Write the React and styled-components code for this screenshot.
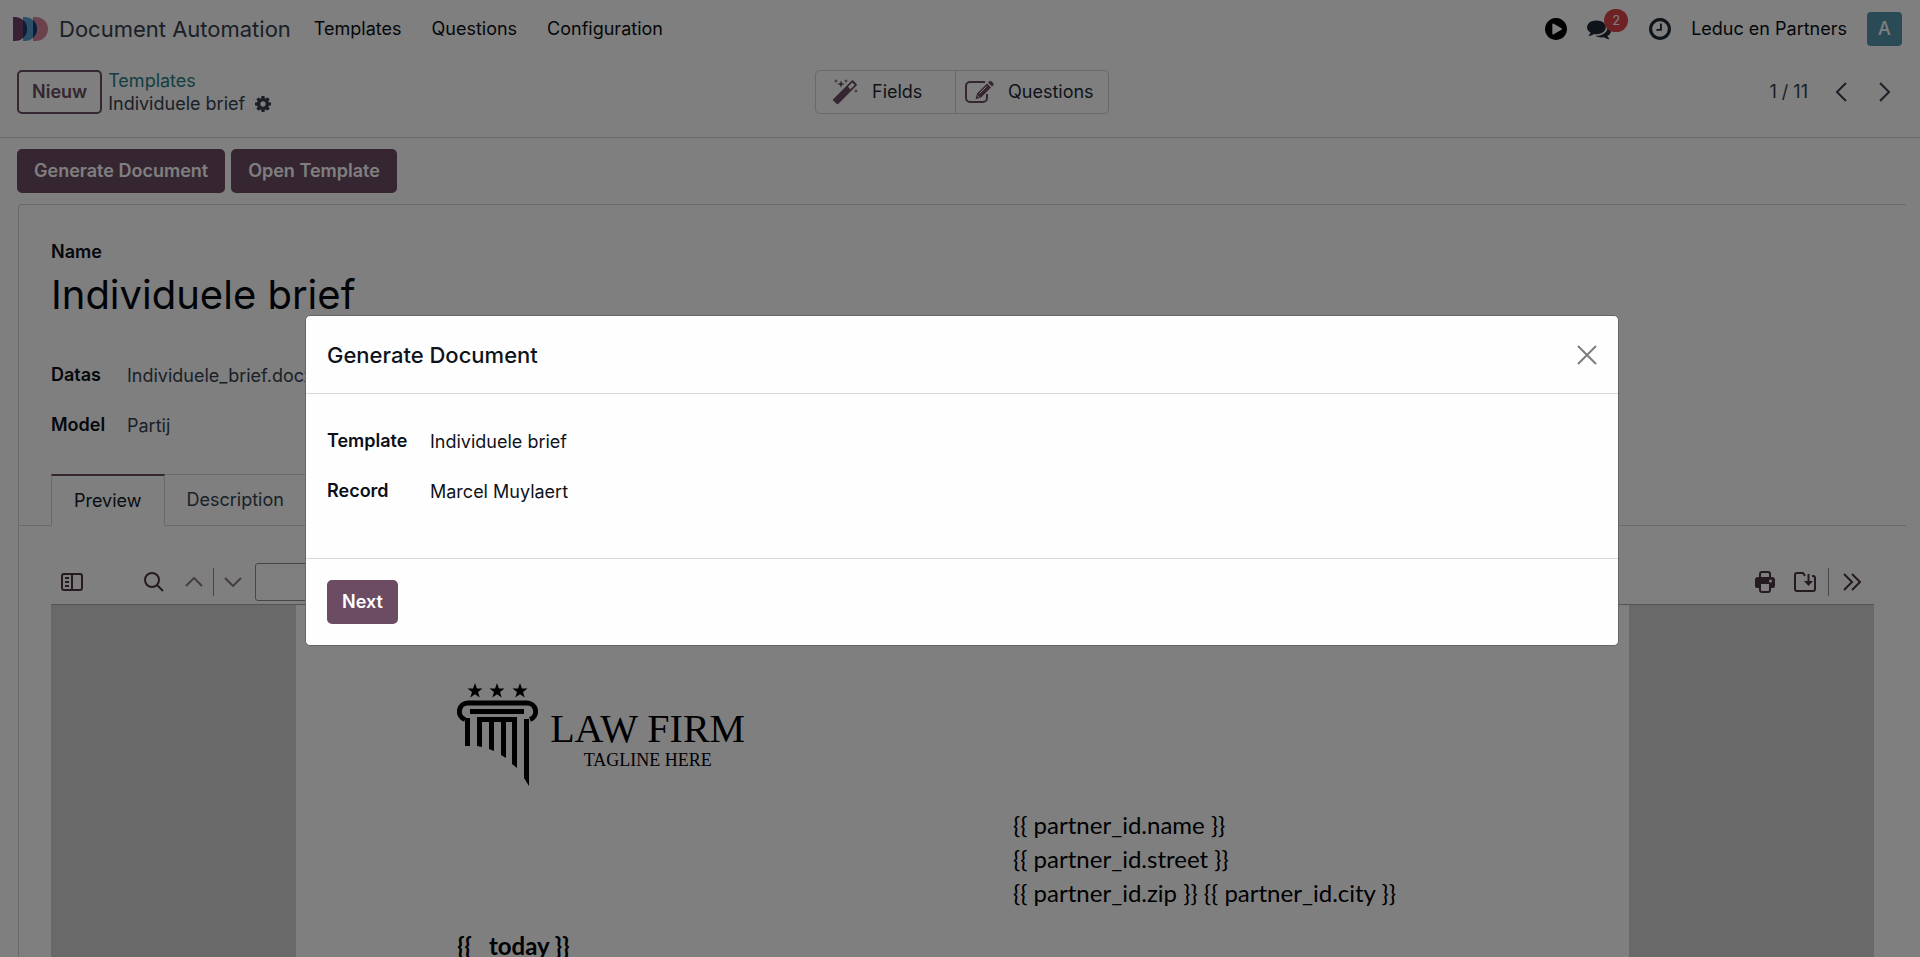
import React from 'react';
import styled, { createGlobalStyle } from 'styled-components';

const GlobalStyle = createGlobalStyle`
* {
box-sizing: border-box;
}
body {
margin: 0;
background-color: #fcfffc;
color: #374151;
font-family: Inter, "Liberation Sans", sans-serif;
font-size: 18px;
line-height: 24px;
}
button, input {
font: inherit;
color: inherit;
}
a {
color: inherit;
text-decoration: none;
}
h1, h2, p, dl, dd {
margin: 0;
}
`
const Shell = styled.div`
display: flex;
flex-direction: column;
height: 100vh;
overflow: hidden;
`
const Navbar = styled.header`
display: flex;
align-items: center;
justify-content: space-between;
flex: none;
height: 56px;
padding: 1px 18px 0 13px;
color: #0b0d14;
`
const NavGroup = styled.div`
display: flex;
align-items: center;
gap: ${({ gap }) => gap}px;
`
const Brand = styled.a`
display: flex;
align-items: center;
gap: 11px;
color: #374151;
font-size: 22px;
`
const NavMenu = styled.nav`
display: flex;
gap: 30px;
`
const IconButton = styled.button`
display: flex;
align-items: center;
justify-content: ${({ align }) => align || 'center'};
position: relative;
width: ${({ width }) => width || 22}px;
padding: 0;
border: 0;
background: none;
color: ${({ color }) => color || '#374151'};
`
const Badge = styled.span`
position: absolute;
top: -8px;
left: 17px;
width: 24px;
border-radius: 12px;
background-color: #dc444a;
color: #fcfffc;
font-size: 13px;
line-height: 23px;
text-align: center;
`
const Avatar = styled.span`
width: 35px;
border-radius: 4px;
background-color: #5494ac;
color: #fcfffc;
font-weight: 500;
line-height: 34px;
text-align: center;
`
const ControlPanel = styled.div`
display: grid;
grid-template-columns: 1fr auto 1fr;
align-items: center;
flex: none;
height: 82px;
padding: 0 13px 9px 17px;
border-bottom: 1px solid #d2d5d4;
`
const Button = styled.button`
height: 44px;
padding: 0 13px;
border: 2px solid #6b4c63;
border-radius: 5px;
background-color: ${({ outline }) => outline ? 'transparent' : '#6b4c63'};
color: ${({ outline }) => outline ? '#6b4c63' : '#ffffff'};
font-weight: 600;
white-space: nowrap;
`
const Crumbs = styled.div`
line-height: 23px;
`
const CrumbLink = styled.a`
color: #2a7f88;
`
const CrumbCurrent = styled.div`
display: flex;
align-items: center;
gap: 10px;
`
const StatButtons = styled.div`
display: flex;
border: 1px solid #d2d5d4;
border-radius: 5px;
`
const StatButton = styled.button`
display: flex;
align-items: center;
gap: 14px;
width: ${({ width }) => width}px;
height: 42px;
padding: 0 0 0 ${({ inset }) => inset}px;
border: 0;
background: none;
color: #1f2937;

& + & {
border-left: 1px solid #d2d5d4;
}
`
const Pager = styled.div`
display: flex;
align-items: center;
justify-content: flex-end;
gap: 22px;
padding-right: 11px;
`
const StatusBar = styled.div`
display: flex;
flex: none;
gap: 6px;
padding: 11px 17px;
`
const StatusButton = styled(Button)`
padding: 0 15px;
`
const Sheet = styled.main`
flex: 1;
margin: 0 13px 0 18px;
border: 1px solid #d2d5d4;
border-right-color: #f6f9f7;
border-radius: 4px 4px 0 0;
`
const SheetFields = styled.section`
padding: 35px 32px 0;
color: #05070f;
`
const FieldLabel = styled.dt`
color: #0b0f18;
font-weight: 600;
`
const Title = styled.h1`
margin: 6px 0 43px;
font-size: 40px;
font-weight: 400;
line-height: 50px;
`
const FieldList = styled.dl`
display: grid;
grid-template-columns: ${({ labels }) => labels}px 1fr;
row-gap: 26px;
`
const FieldValue = styled.dd`
padding-top: 1px;
line-height: 23px;
color: ${({ color }) => color};
`
const Tabs = styled.div`
display: flex;
margin-top: 37px;
padding-left: 32px;
border-bottom: 1px solid #d2d5d4;
`
const Tab = styled.button`
height: 52px;
margin-bottom: -1px;
padding: 0 22px;
border: 1px solid #d2d5d4;
border-left-width: ${({ active }) => active ? 1 : 0}px;
border-top: ${({ active }) => active ? '2px solid #6b4c63' : '1px solid #d2d5d4'};
border-bottom-color: ${({ active }) => active ? '#fcfffc' : '#d2d5d4'};
background: none;
color: ${({ active }) => active ? '#111827' : '#374151'};
`
const Viewer = styled.section`
padding: 34px 32px 0;
`
const Toolbar = styled.div`
display: flex;
align-items: center;
justify-content: space-between;
height: 45px;
padding: 0 11px 0 10px;
border-bottom: 1px solid #a8a8a8;
`
const ToolGroup = styled.div`
display: flex;
align-items: center;
`
const Gap = styled.span`
width: ${({ width }) => width}px;
`
const Divider = styled.span`
width: 1px;
height: 28px;
margin: 0 ${({ right }) => right}px 0 ${({ left }) => left}px;
background-color: #8c8c8c;
`
const PageInput = styled.input`
width: 86px;
height: 38px;
margin-left: 11px;
border: 1px solid #8c8c8c;
border-radius: 3px;
background: transparent;
text-align: right;
`
const Canvas = styled.div`
display: flex;
justify-content: center;
background-color: #d2d2d2;
`
const Paper = styled.article`
width: 73.1%;
height: 1400px;
padding: 78px 161px;
background-color: #fcfffc;
color: #000005;
font-family: Lato, "Open Sans", sans-serif;
font-size: 24px;
line-height: 34px;
`
const Letterhead = styled.div`
display: flex;
gap: 12px;
`
const FirmName = styled.div`
display: flex;
flex-direction: column;
align-items: center;
padding-top: 23px;
font-family: "Liberation Serif", serif;
font-size: 40px;
line-height: 45px;
`
const Tagline = styled.span`
font-size: 18px;
line-height: 18px;
`
const Address = styled.address`
margin: 20px 0 19px 55%;
font-style: normal;
white-space: nowrap;
`
const Today = styled.p`
font-weight: 700;
`
const Backdrop = styled.div`
position: fixed;
inset: 0;
padding: 315px 301px 0 305px;
background-color: rgba(0, 0, 0, 0.5);
`
const Dialog = styled.div`
border: 1px solid #646665;
border-radius: 5px;
background-color: #fefefe;
color: #0f131c;
`
const DialogHeader = styled.div`
display: flex;
align-items: center;
justify-content: space-between;
height: 78px;
padding: 0 20px 0 21px;
border-bottom: 1px solid #d8dadd;
`
const DialogTitle = styled.h2`
font-size: 22px;
font-weight: 500;
`
const DialogBody = styled.div`
height: 165px;
padding: 35px 21px;
border-bottom: 1px solid #d8dadd;
`
const DialogFooter = styled.div`
padding: 21px;
`

const CLOCK = 'M896 544v448q0 14-9 23t-23 9h-320q-14 0-23-9t-9-23v-64q0-14 9-23t23-9h224v-352q0-14 9-23t23-9h64q14 0 23 9t9 23zm416 352q0-148-73-273t-198-198-273-73-273 73-198 198-73 273 73 273 198 198 273 73 273-73 198-198 73-273zm224 0q0 209-103 385.5t-279.5 279.5-385.5 103-385.5-103-279.5-279.5-103-385.5 103-385.5 279.5-279.5 385.5-103 385.5 103 279.5 279.5 103 385.5z'
const PLAY = 'M768 128q209 0 385.5 103t279.5 279.5 103 385.5-103 385.5-279.5 279.5-385.5 103-385.5-103-279.5-279.5-103-385.5 103-385.5 279.5-279.5 385.5-103zm384 823q32-18 32-55t-32-55l-544-320q-31-19-64-1-32 19-32 56v640q0 37 32 56 16 8 32 8 17 0 32-9z'
const COMMENTS = 'M1408 768q0 139-94 257t-256.5 186.5-353.5 68.5q-86 0-176-16-124 88-278 128-36 9-86 16h-3q-11 0-20.5-8t-11.5-21q-1-3-1-6.5t.5-6.5 2-6l2.5-5 3.5-5.5 4-5 4.5-5 4-4.5q5-6 23-25t26-29.5 22.5-29 25-38.5 20.5-44q-124-72-195-177t-71-224q0-139 94-257t256.5-186.5 353.5-68.5 353.5 68.5 256.5 186.5 94 257zm384 256q0 120-71 224.5t-195 176.5q10 24 20.5 44t25 38.5 22.5 29 26 29.5 23 25q1 1 4 4.5t4.5 5 4 5 3.5 5.5l2.5 5 2 6 .5 6.5-1 6.5q-3 14-13 22t-22 7q-50-7-86-16-154-40-278-128-90 16-176 16-271 0-472-132 58 4 88 4 161 0 309-45t264-129q125-92 192-212t67-254q0-77-23-152 129 71 204 178t75 230z'
const COG = 'M1024 896q0-106-75-181t-181-75-181 75-75 181 75 181 181 75 181-75 75-181zm512-109v222q0 12-8 23t-20 13l-185 28q-19 54-39 91 35 50 107 138 10 12 10 25t-9 23q-27 37-99 108t-94 71q-12 0-26-9l-138-108q-44 23-91 38-16 136-29 186-7 28-36 28h-222q-14 0-24.5-8.5t-11.5-21.5l-28-184q-49-16-90-37l-141 107q-10 9-25 9-14 0-25-11-126-114-165-168-7-10-7-23 0-12 8-23 15-21 51-66.5t54-70.5q-27-50-41-99l-183-27q-13-2-21-12.5t-8-23.5v-222q0-12 8-23t19-13l186-28q14-46 39-92-40-57-107-138-10-12-10-24 0-10 9-23 26-36 98.5-107.5t94.5-71.5q13 0 26 10l138 107q44-23 91-38 16-136 29-186 7-28 36-28h222q14 0 24.5 8.5t11.5 21.5l28 184q49 16 90 37l142-107q9-9 24-9 13 0 25 10 129 119 165 170 7 8 7 22 0 12-8 23-15 21-51 66.5t-54 70.5q26 50 41 98l183 28q13 2 21 12.5t8 23.5z'

const Glyph = ({ d, size, box = '0 128 1536 1536' }) => (
    <svg width={size} height={size} viewBox={box} fill="currentColor" aria-hidden="true"><path d={d} /></svg>
)

const Line = ({ width, height, stroke = 2, children }) => (
    <svg width={width} height={height} viewBox={`0 0 ${width} ${height}`} fill="none" stroke="currentColor" strokeWidth={stroke} aria-hidden="true">{children}</svg>
)

const BrandMark = () => (
    <svg width="35" height="24" viewBox="0 0 35 24" aria-hidden="true">
        <path d="M20 0h3a12 12 0 0 1 0 24h-3z" fill="#d98598" />
        <path d="M10 0h2a12 12 0 0 1 0 24h-2z" fill="#52a0d0" />
        <path d="M0 0h2a12 12 0 0 1 0 24H0z" fill="#74406a" />
        <path d="M10 3a12 12 0 0 1 0 18z" fill="#1a3a6e" />
        <path d="M20 3a12 12 0 0 1 0 18z" fill="#1a3a6e" />
    </svg>
)

const Wand = () => (
    <svg width="26" height="26" viewBox="0 0 26 26" fill="#6b4c63" aria-hidden="true">
        <path fillRule="evenodd" d="M21.2 1.6 24.6 5a1 1 0 0 1 0 1.4L6.2 25a1 1 0 0 1-1.4 0L1.2 21.6a1 1 0 0 1 0-1.4L19.8 1.6a1 1 0 0 1 1.4 0zM20.3 3.5 16 7.8l2.4 2.4 4.3-4.3z" />
        <path d="m9 1.5 1 2.6 2.7 1-2.7 1-1 2.7-1-2.7-2.7-1 2.7-1zM4 0l.6 1.4L6 2l-1.4.6L4 4l-.6-1.4L2 2l1.4-.6zM14 0l.6 1.4L16 2l-1.4.6L14 4l-.6-1.4L12 2l1.4-.6zM24 10l.6 1.4 1.4.6-1.4.6-.6 1.4-.6-1.4L22 12l1.4-.6z" />
    </svg>
)

const Edit = () => (
    <svg width="29" height="24" viewBox="0 0 29 24" fill="none" aria-hidden="true">
        <path d="M20 2H5a4 4 0 0 0-4 4v12a4 4 0 0 0 4 4h13a4 4 0 0 0 4-4v-4" stroke="#6b4c63" strokeWidth="2" />
        <path d="m22 3.5 4 4L16 17.6l-5.5 1.6 1.5-5.6zM23 2.5l1.3-1.3a1.5 1.5 0 0 1 2 0l2 2a1.5 1.5 0 0 1 0 2L27 6.5z" fill="#6b4c63" />
        <path d="m14.5 13.5 7-7M12.5 15.5l1.8 1.8" stroke="#fcfffc" />
    </svg>
)

const Printer = () => (
    <svg width="20" height="22" viewBox="0 0 20 22" fill="none" stroke="currentColor" strokeWidth="2" aria-hidden="true">
        <path d="M5 7V3a2 2 0 0 1 2-2h6a2 2 0 0 1 2 2v4" />
        <path d="M3 6h14a3 3 0 0 1 3 3v6a2 2 0 0 1-2 2h-2v-4H4v4H2a2 2 0 0 1-2-2V9a3 3 0 0 1 3-3z" fill="currentColor" stroke="none" />
        <path d="M5 13v6a2 2 0 0 0 2 2h6a2 2 0 0 0 2-2v-6" />
        <circle cx="15.5" cy="10" r="1.5" fill="#fcfffc" stroke="none" />
    </svg>
)

const Pillar = () => (
    <svg width="81" height="105" viewBox="0 0 81 105" aria-hidden="true">
        {[18, 40, 63].map((x) => (
            <path key={x} transform={`translate(${x} 8)`} d="m0-8 1.9 5.4h5.6L3 .9l1.7 5.6L0 3.2l-4.7 3.3L-3 .9l-4.5-3.5h5.6z" />
        ))}
        <path d="M8 36.5A8.5 8.5 0 0 1 11 20h59a8.5 8.5 0 0 1 3 16.5" fill="none" stroke="#000005" strokeWidth="5" />
        <path d="M13 26h54v5H13zM8 35h5v28H8zM20 34h40v5H20zM20 38h5v26l-5-1zM32 38h5v30l-5-2zM44 38h5v37l-5-3zM55 38h5v47l-5-4zM67 36h5v67l-5-8z" />
    </svg>
)

export default function App() {
    return (
        <>
            <GlobalStyle />
            <Shell>
                <Navbar>
                    <NavGroup gap={23}>
                        <Brand href="#home"><BrandMark />Document Automation</Brand>
                        <NavMenu>
                            <a href="#templates">Templates</a>
                            <a href="#questions">Questions</a>
                            <a href="#configuration">Configuration</a>
                        </NavMenu>
                    </NavGroup>
                    <NavGroup gap={20}>
                        <IconButton aria-label="Start" color="#000005"><Glyph d={PLAY} size={22} /></IconButton>
                        <IconButton aria-label="Messages" color="#1f2937" width={42} align="flex-start">
                            <Glyph d={COMMENTS} size={24} box="0 0 1792 1792" />
                            <Badge>2</Badge>
                        </IconButton>
                        <IconButton aria-label="Activities" color="#1f2937"><Glyph d={CLOCK} size={22} /></IconButton>
                        <span>Leduc en Partners</span>
                        <Avatar>A</Avatar>
                    </NavGroup>
                </Navbar>

                <ControlPanel>
                    <NavGroup gap={6}>
                        <Button outline="true">Nieuw</Button>
                        <Crumbs>
                            <CrumbLink href="#templates">Templates</CrumbLink>
                            <CrumbCurrent>
                                Individuele brief
                                <IconButton aria-label="Actions" width={16}><Glyph d={COG} size={16} /></IconButton>
                            </CrumbCurrent>
                        </Crumbs>
                    </NavGroup>
                    <StatButtons>
                        <StatButton width={139} inset={16}><Wand />Fields</StatButton>
                        <StatButton width={153} inset={9}><Edit />Questions</StatButton>
                    </StatButtons>
                    <Pager>
                        <span>1 / 11</span>
                        <IconButton aria-label="Previous"><Line width={12} height={20}><path d="m11 1-9 9 9 9" /></Line></IconButton>
                        <IconButton aria-label="Next record"><Line width={12} height={20}><path d="m1 1 9 9-9 9" /></Line></IconButton>
                    </Pager>
                </ControlPanel>

                <StatusBar>
                    <StatusButton>Generate Document</StatusButton>
                    <StatusButton>Open Template</StatusButton>
                </StatusBar>

                <Sheet>
                    <SheetFields>
                        <FieldLabel as="div">Name</FieldLabel>
                        <Title>Individuele brief</Title>
                        <FieldList labels={76}>
                            <FieldLabel>Datas</FieldLabel>
                            <FieldValue color="#374151">Individuele_brief.docx</FieldValue>
                            <FieldLabel>Model</FieldLabel>
                            <FieldValue color="#374151">Partij</FieldValue>
                        </FieldList>
                    </SheetFields>
                    <Tabs role="tablist">
                        <Tab role="tab" aria-selected="true" active="true">Preview</Tab>
                        <Tab role="tab" aria-selected="false">Description</Tab>
                    </Tabs>
                    <Viewer>
                        <Toolbar>
                            <ToolGroup>
                                <IconButton aria-label="Toggle sidebar" color="#4b3545">
                                    <Line width={22} height={18}>
                                        <rect x="1" y="1" width="20" height="16" rx="2" />
                                        <path d="M11 1v16M4 5h4M4 9h4M4 13h4" />
                                    </Line>
                                </IconButton>
                                <Gap width={60} />
                                <IconButton aria-label="Find" color="#4b3545">
                                    <Line width={20} height={20}><circle cx="8" cy="8" r="7" /><path d="m13 13 6 6" /></Line>
                                </IconButton>
                                <Gap width={18} />
                                <IconButton aria-label="Previous page" color="#8a7a87"><Line width={18} height={10}><path d="m1 9 8-8 8 8" /></Line></IconButton>
                                <Divider left={8} right={8} />
                                <IconButton aria-label="Next page" color="#8a7a87"><Line width={18} height={10}><path d="m1 1 8 8 8-8" /></Line></IconButton>
                                <PageInput aria-label="Page" />
                            </ToolGroup>
                            <ToolGroup>
                                <IconButton aria-label="Print" color="#4b3545"><Printer /></IconButton>
                                <Gap width={18} />
                                <IconButton aria-label="Save" color="#4b3545">
                                    <Line width={22} height={20}>
                                        <path d="M11 4 9 1H3a2 2 0 0 0-2 2v14a2 2 0 0 0 2 2h16a2 2 0 0 0 2-2V6a2 2 0 0 0-2-2h-1M14.5 2v9" />
                                        <path d="m10 9 4.5 5L19 9z" fill="currentColor" stroke="none" />
                                    </Line>
                                </IconButton>
                                <Divider left={12} right={12} />
                                <IconButton aria-label="Tools" color="#4b3545"><Line width={18} height={18}><path d="m1 1 8 8-8 8M9 1l8 8-8 8" /></Line></IconButton>
                            </ToolGroup>
                        </Toolbar>
                        <Canvas>
                            <Paper>
                                <Letterhead>
                                    <Pillar />
                                    <FirmName>LAW FIRM<Tagline>TAGLINE HERE</Tagline></FirmName>
                                </Letterhead>
                                <Address>
                                    {'{{ partner_id.name }}'}<br />
                                    {'{{ partner_id.street }}'}<br />
                                    {'{{ partner_id.zip }} {{ partner_id.city }}'}
                                </Address>
                                <Today>{'{{ _today }}'}</Today>
                            </Paper>
                        </Canvas>
                    </Viewer>
                </Sheet>
            </Shell>

            <Backdrop>
                <Dialog role="dialog" aria-modal="true" aria-labelledby="dialog-title">
                    <DialogHeader>
                        <DialogTitle id="dialog-title">Generate Document</DialogTitle>
                        <IconButton aria-label="Close" color="#7b7d80"><Line width={20} height={20}><path d="m1 1 18 18M19 1 1 19" /></Line></IconButton>
                    </DialogHeader>
                    <DialogBody>
                        <FieldList labels={103}>
                            <FieldLabel>Template</FieldLabel>
                            <FieldValue>Individuele brief</FieldValue>
                            <FieldLabel>Record</FieldLabel>
                            <FieldValue>Marcel Muylaert</FieldValue>
                        </FieldList>
                    </DialogBody>
                    <DialogFooter>
                        <Button>Next</Button>
                    </DialogFooter>
                </Dialog>
            </Backdrop>
        </>
    );
}
